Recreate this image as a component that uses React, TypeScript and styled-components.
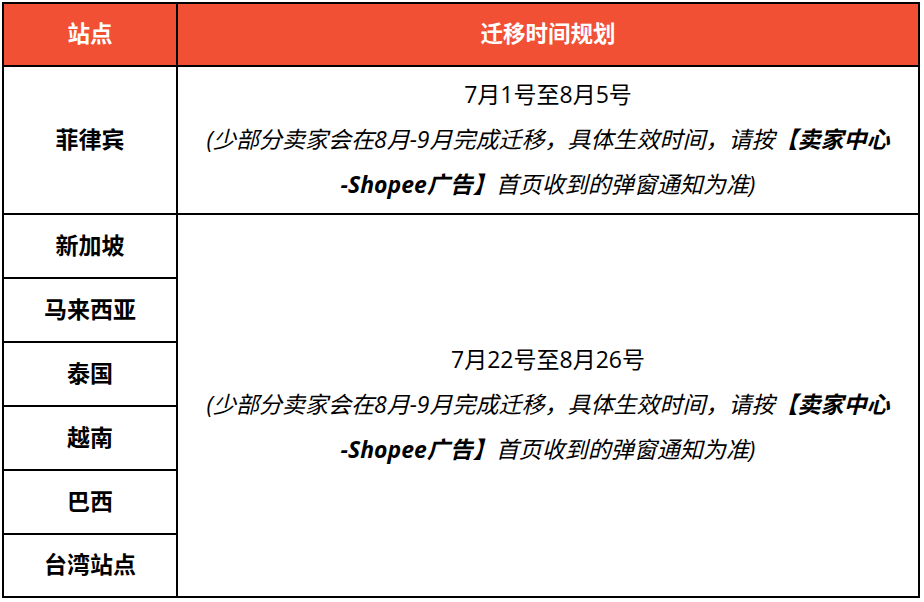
import styled, { createGlobalStyle } from 'styled-components'

const GlobalStyle = createGlobalStyle`
  html, body {
    margin: 0;
    padding: 0;
    background: #ffffff;
  }
  body {
    font-family: "Open Sans", "Noto Sans CJK SC", sans-serif;
    color: #000;
  }
`

const Table = styled.div`
  margin: 2px;
  width: 918px;
  box-sizing: border-box;
  padding: 2px;
  display: grid;
  grid-template-columns: 172px 1fr;
  grid-template-rows: 61px 146px 62px 62px 62px 62px 62px 61px;
  gap: 2px;
  background: #000;
`

const HeadCell = styled.div`
  background: #f15034;
  color: #fff;
  display: flex;
  align-items: center;
  justify-content: center;
  padding-bottom: 4px;
  font-size: 22.5px;
  font-weight: 700;
`

const SiteCell = styled.div`
  background: #fff;
  display: flex;
  align-items: center;
  justify-content: center;
  padding-bottom: 5px;
  font-size: 23px;
  font-weight: 700;
`

const PlanCell = styled.div<{ $span: number }>`
  background: #fff;
  grid-row: span ${p => p.$span};
  display: flex;
  flex-direction: column;
  align-items: center;
  justify-content: center;
  padding-bottom: 2px;
  text-align: center;
  font-size: 23px;
  line-height: 45px;
`

const Note = styled.div`
  font-style: italic;

  b {
    font-weight: 700;
  }
`

const Plan = ({ dates }: { dates: string }) => (
  <>
    <div>{dates}</div>
    <Note>
      (少部分卖家会在8月-9月完成迁移，具体生效时间，请按<b>【卖家中心</b>
      <br />
      <b>-Shopee广告】</b>首页收到的弹窗通知为准)
    </Note>
  </>
)

const otherSites = ['新加坡', '马来西亚', '泰国', '越南', '巴西', '台湾站点']

export default function App() {
  return (
    <>
      <GlobalStyle />
      <Table>
        <HeadCell>站点</HeadCell>
        <HeadCell>迁移时间规划</HeadCell>

        <SiteCell>菲律宾</SiteCell>
        <PlanCell $span={1}>
          <Plan dates="7月1号至8月5号" />
        </PlanCell>

        <SiteCell style={{ gridRow: 3 }}>{otherSites[0]}</SiteCell>
        <PlanCell $span={6} style={{ gridColumn: 2, gridRow: '3 / span 6' }}>
          <Plan dates="7月22号至8月26号" />
        </PlanCell>
        {otherSites.slice(1).map(site => (
          <SiteCell key={site}>{site}</SiteCell>
        ))}
      </Table>
    </>
  )
}
